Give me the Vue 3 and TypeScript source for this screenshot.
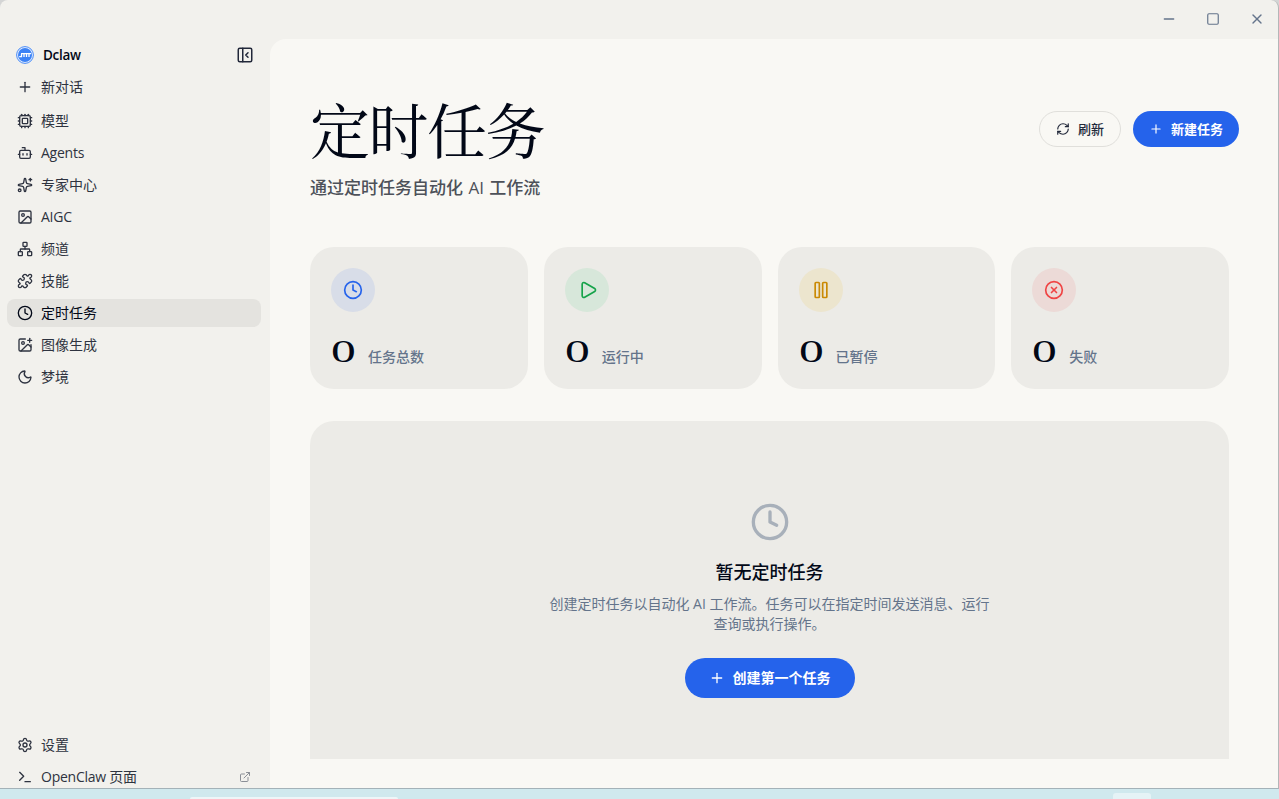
<script setup lang="ts">
import { h, type FunctionalComponent } from 'vue'

interface NavItem {
  icon: string
  label: string
  active?: boolean
  latin?: boolean
}

const icons: Record<string, string> = {
  plus: '<path d="M5 12h14"/><path d="M12 5v14"/>',
  minus: '<path d="M5 12h14"/>',
  x: '<path d="M18 6 6 18"/><path d="m6 6 12 12"/>',
  square: '<rect width="18" height="18" x="3" y="3" rx="2"/>',
  panel: '<rect width="18" height="18" x="3" y="3" rx="2"/><path d="M9 3v18"/><path d="m16 15-3-3 3-3"/>',
  cpu: '<rect width="16" height="16" x="4" y="4" rx="2"/><rect width="8" height="8" x="8" y="8" rx="1"/><path d="M17 2v2"/><path d="M17 20v2"/><path d="M2 17h2"/><path d="M2 7h2"/><path d="M20 17h2"/><path d="M20 7h2"/><path d="M7 2v2"/><path d="M7 20v2"/><path d="M12 2v2"/><path d="M12 20v2"/><path d="M2 12h2"/><path d="M20 12h2"/>',
  bot: '<path d="M12 8V4H8"/><rect width="16" height="12" x="4" y="8" rx="2"/><path d="M2 14h2"/><path d="M20 14h2"/><path d="M15 13v2"/><path d="M9 13v2"/>',
  sparkles: '<path d="M11.017 2.814a1 1 0 0 1 1.966 0l1.051 5.558a2 2 0 0 0 1.594 1.594l5.558 1.051a1 1 0 0 1 0 1.966l-5.558 1.051a2 2 0 0 0-1.594 1.594l-1.051 5.558a1 1 0 0 1-1.966 0l-1.051-5.558a2 2 0 0 0-1.594-1.594l-5.558-1.051a1 1 0 0 1 0-1.966l5.558-1.051a2 2 0 0 0 1.594-1.594z"/><path d="M20 2v4"/><path d="M22 4h-4"/><circle cx="4" cy="20" r="2"/>',
  image: '<rect width="18" height="18" x="3" y="3" rx="2" ry="2"/><circle cx="9" cy="9" r="2"/><path d="m21 15-3.086-3.086a2 2 0 0 0-2.828 0L6 21"/>',
  network: '<rect x="16" y="16" width="6" height="6" rx="1"/><rect x="2" y="16" width="6" height="6" rx="1"/><rect x="9" y="2" width="6" height="6" rx="1"/><path d="M5 16v-3a1 1 0 0 1 1-1h12a1 1 0 0 1 1 1v3"/><path d="M12 12V8"/>',
  puzzle: '<path d="M15.39 4.39a1 1 0 0 0 1.68-.474 2.5 2.5 0 1 1 3.014 3.015 1 1 0 0 0-.474 1.68l1.683 1.682a2.414 2.414 0 0 1 0 3.414L19.61 15.39a1 1 0 0 1-1.68-.474 2.5 2.5 0 1 0-3.014 3.015 1 1 0 0 1 .474 1.68l-1.683 1.682a2.414 2.414 0 0 1-3.414 0L8.61 19.61a1 1 0 0 0-1.68.474 2.5 2.5 0 1 1-3.014-3.015 1 1 0 0 0 .474-1.68l-1.683-1.682a2.414 2.414 0 0 1 0-3.414L4.39 8.61a1 1 0 0 1 1.68.474 2.5 2.5 0 1 0 3.014-3.015 1 1 0 0 1-.474-1.68l1.683-1.682a2.414 2.414 0 0 1 3.414 0z"/>',
  clock: '<circle cx="12" cy="12" r="10"/><path d="M12 6v6l4 2"/>',
  imagePlus: '<path d="M16 5h6"/><path d="M19 2v6"/><path d="M21 11.5V19a2 2 0 0 1-2 2H5a2 2 0 0 1-2-2V5a2 2 0 0 1 2-2h7.5"/><path d="m21 15-3.086-3.086a2 2 0 0 0-2.828 0L6 21"/><circle cx="9" cy="9" r="2"/>',
  moon: '<path d="M20.985 12.486a9 9 0 1 1-9.473-9.472c.405-.022.617.46.402.803a6 6 0 0 0 8.268 8.268c.344-.215.825-.004.803.401"/>',
  settings: '<path d="M9.671 4.136a2.34 2.34 0 0 1 4.659 0 2.34 2.34 0 0 0 3.319 1.915 2.34 2.34 0 0 1 2.33 4.033 2.34 2.34 0 0 0 0 3.831 2.34 2.34 0 0 1-2.33 4.033 2.34 2.34 0 0 0-3.319 1.915 2.34 2.34 0 0 1-4.659 0 2.34 2.34 0 0 0-3.32-1.915 2.34 2.34 0 0 1-2.33-4.033 2.34 2.34 0 0 0 0-3.831A2.34 2.34 0 0 1 6.35 6.051a2.34 2.34 0 0 0 3.319-1.915"/><circle cx="12" cy="12" r="3"/>',
  terminal: '<path d="M12 19h8"/><path d="m4 17 6-6-6-6"/>',
  external: '<path d="M15 3h6v6"/><path d="M10 14 21 3"/><path d="M18 13v6a2 2 0 0 1-2 2H5a2 2 0 0 1-2-2V8a2 2 0 0 1 2-2h6"/>',
  refresh: '<path d="M3 12a9 9 0 0 1 9-9 9.75 9.75 0 0 1 6.74 2.74L21 8"/><path d="M21 3v5h-5"/><path d="M21 12a9 9 0 0 1-9 9 9.75 9.75 0 0 1-6.74-2.74L3 16"/><path d="M8 16H3v5"/>',
  play: '<path d="M5 5a2 2 0 0 1 3.008-1.728l11.997 6.998a2 2 0 0 1 .003 3.458l-12 7A2 2 0 0 1 5 19z"/>',
  pause: '<rect x="14" y="3" width="5" height="18" rx="1"/><rect x="5" y="3" width="5" height="18" rx="1"/>',
  failed: '<circle cx="12" cy="12" r="10"/><path d="m15 9-6 6"/><path d="m9 9 6 6"/>',
}

const Icon: FunctionalComponent<{ name: string; size?: number; weight?: number }> = (props) =>
  h('svg', {
    width: props.size ?? 16,
    height: props.size ?? 16,
    viewBox: '0 0 24 24',
    fill: 'none',
    stroke: 'currentColor',
    'stroke-width': props.weight ?? 2,
    'stroke-linecap': 'round',
    'stroke-linejoin': 'round',
    innerHTML: icons[props.name],
  })
Icon.props = ['name', 'size', 'weight']

const nav: NavItem[] = [
  { icon: 'cpu', label: '模型' },
  { icon: 'bot', label: 'Agents', latin: true },
  { icon: 'sparkles', label: '专家中心' },
  { icon: 'image', label: 'AIGC', latin: true },
  { icon: 'network', label: '频道' },
  { icon: 'puzzle', label: '技能' },
  { icon: 'clock', label: '定时任务', active: true },
  { icon: 'imagePlus', label: '图像生成' },
  { icon: 'moon', label: '梦境' },
]

const stats = [
  { icon: 'clock', tone: 'blue', value: 0, label: '任务总数' },
  { icon: 'play', tone: 'green', value: 0, label: '运行中' },
  { icon: 'pause', tone: 'yellow', value: 0, label: '已暂停' },
  { icon: 'failed', tone: 'red', value: 0, label: '失败' },
]
</script>

<template>
  <div class="desktop">
    <div class="window">
      <header class="titlebar">
        <button class="win-btn"><Icon name="minus" /></button>
        <button class="win-btn"><Icon name="square" :size="14" /></button>
        <button class="win-btn"><Icon name="x" /></button>
      </header>
      <div class="body">
        <aside class="sidebar">
          <div class="brand">
            <svg class="logo" width="18" height="18" viewBox="0 0 18 18">
              <circle cx="9" cy="9" r="8.4" fill="#e8effc" stroke="#4a8cf7" stroke-width="1" />
              <circle cx="9" cy="9" r="7" fill="#3b82f6" />
              <path d="M3.2 10.6h2.3V8M8 11V8M10.5 11V8M13 11V8M5 7.6h10" fill="none" stroke="#fff" stroke-width="1.3" />
            </svg>
            <span class="brand-name">Dclaw</span>
            <Icon class="collapse" name="panel" :size="18" />
          </div>
          <nav class="nav">
            <a class="item new"><Icon name="plus" /><span>新对话</span></a>
            <a v-for="item in nav" :key="item.label" class="item" :class="{ active: item.active, latin: item.latin }">
              <Icon :name="item.icon" /><span>{{ item.label }}</span>
            </a>
          </nav>
          <nav class="nav foot">
            <a class="item"><Icon name="settings" /><span>设置</span></a>
            <a class="item latin"><Icon name="terminal" /><span>OpenClaw 页面</span><Icon class="ext" name="external" :size="12" /></a>
          </nav>
        </aside>
        <main class="main">
          <div class="head">
            <div>
              <h1>定时任务</h1>
              <p class="subtitle">通过定时任务自动化 AI 工作流</p>
            </div>
            <div class="actions">
              <button class="btn outline"><Icon name="refresh" :size="14" /><span>刷新</span></button>
              <button class="btn primary"><Icon name="plus" :size="14" /><span>新建任务</span></button>
            </div>
          </div>
          <div class="scroll">
            <section class="stats">
              <div v-for="s in stats" :key="s.label" class="card">
                <div class="badge" :class="s.tone"><Icon :name="s.icon" :size="20" /></div>
                <div class="figure">
                  <span class="value">{{ s.value }}</span>
                  <span class="caption">{{ s.label }}</span>
                </div>
              </div>
            </section>
            <section class="empty">
              <Icon class="empty-icon" name="clock" :size="40" />
              <h3>暂无定时任务</h3>
              <p>创建定时任务以自动化 AI 工作流。任务可以在指定时间发送消息、运行查询或执行操作。</p>
              <button class="btn primary large"><Icon name="plus" :size="16" /><span>创建第一个任务</span></button>
            </section>
          </div>
        </main>
      </div>
    </div>
    <div class="taskbar"><span class="search"></span><span class="tile"></span></div>
  </div>
</template>

<style>
html,
body {
  margin: 0;
  overflow: hidden;
}
</style>

<style scoped>
.desktop {
  width: 1279px;
  height: 799px;
  box-sizing: border-box;
  display: flex;
  flex-direction: column;
  background: linear-gradient(#d4d5d5 0 400px, #d0e9ee 400px);
  color: #020817;
  font-family: 'Open Sans', 'Noto Sans CJK SC', sans-serif;
  overflow: hidden;
}
.window {
  height: 789px;
  flex: none;
  box-sizing: border-box;
  border-right: 1px solid #b4b7b8;
  border-bottom: 1px solid #a4b2b8;
  border-radius: 8px 8px 0 0;
  background: #f2f1ed;
  display: flex;
  flex-direction: column;
  overflow: hidden;
}
.titlebar {
  height: 38px;
  margin-bottom: 1px;
  margin-right: -1px;
  flex: none;
  display: flex;
  justify-content: flex-end;
}
.win-btn {
  width: 44px;
  border: 0;
  padding: 0;
  background: none;
  color: #64748b;
  display: flex;
  align-items: center;
  justify-content: center;
}
.body {
  flex: 1;
  min-height: 0;
  display: flex;
}
.sidebar {
  width: 270px;
  flex: none;
  box-sizing: border-box;
  padding: 0 9px 0 7px;
  display: flex;
  flex-direction: column;
}
.brand {
  height: 32px;
  padding: 0 7px 0 9px;
  display: flex;
  align-items: center;
}
.brand-name {
  margin-left: 9px;
  font-size: 13.5px;
  font-weight: 600;
  letter-spacing: -0.3px;
}
.collapse {
  margin-left: auto;
  color: #22283a;
}
.nav {
  display: flex;
  flex-direction: column;
  gap: 4px;
}
.item {
  height: 28px;
  box-sizing: border-box;
  padding: 0 10px;
  border-radius: 8px;
  display: flex;
  align-items: center;
  gap: 8px;
  font-size: 14px;
  line-height: 20px;
  color: #2e3340;
}
.item.new {
  margin: 2px 0;
}
.item svg {
  flex: none;
}
.item.active {
  background: #e4e3df;
  color: #020817;
}
.item.latin span {
  letter-spacing: -0.25px;
}
.item .ext {
  margin-left: auto;
  color: #8b8f96;
}
.foot {
  margin-top: auto;
  margin-bottom: -3px;
}
.main {
  flex: 1;
  min-width: 0;
  box-sizing: border-box;
  padding: 59px 39px 29px 40px;
  border-radius: 16px 0 0 0;
  background: #f9f8f4;
  display: flex;
  flex-direction: column;
}
.head {
  height: 149px;
  flex: none;
  display: flex;
  justify-content: space-between;
}
h1 {
  margin: 0;
  height: 63px;
  font-family: 'Noto Serif CJK SC', 'Liberation Serif', 'Noto Sans CJK SC', serif;
  font-size: 60px;
  line-height: 60px;
  font-weight: 400;
  letter-spacing: -1.5px;
}
.subtitle {
  margin: 14px 0 0;
  font-size: 17px;
  line-height: 26px;
  font-weight: 500;
  word-spacing: 1px;
  color: #4d5159;
}
.actions {
  margin-top: 13px;
  display: flex;
  align-items: flex-start;
  gap: 12px;
}
.btn {
  height: 36px;
  box-sizing: border-box;
  border: 0;
  border-radius: 20px;
  padding: 0 16px;
  display: flex;
  align-items: center;
  gap: 8px;
  font-family: inherit;
  font-size: 13px;
  font-weight: 600;
}
.btn span {
  padding-bottom: 2px;
}
.outline {
  width: 82px;
  border: 1px solid #e0dfdb;
  background: transparent;
  color: #22283a;
}
.outline span {
  font-weight: 500;
}
.primary {
  width: 106px;
  background: #2563eb;
  color: #fff;
}
.scroll {
  flex: 1;
  min-height: 0;
  margin-right: 10px;
  overflow: hidden;
}
.stats {
  display: grid;
  grid-template-columns: repeat(4, 1fr);
  gap: 16px;
}
.card {
  height: 142px;
  box-sizing: border-box;
  padding: 21px 21px 17px;
  border-radius: 24px;
  background: #ecebe7;
  display: flex;
  flex-direction: column;
  justify-content: space-between;
}
.badge {
  width: 44px;
  height: 44px;
  border-radius: 50%;
  display: flex;
  align-items: center;
  justify-content: center;
}
.blue {
  background: #d8dde8;
  color: #2563eb;
}
.green {
  background: #d7e7da;
  color: #16a34a;
}
.green svg {
  margin-left: 2px;
}
.yellow {
  background: #ece5ce;
  color: #ca8a04;
}
.red {
  background: #ecdad7;
  color: #ef4444;
}
.figure {
  height: 40px;
  display: flex;
  align-items: baseline;
}
.value {
  width: 25px;
  margin-right: 12px;
  font-family: 'Liberation Serif', serif;
  font-size: 31px;
  line-height: 40px;
  font-weight: 400;
  transform: scaleX(1.6);
  transform-origin: left;
}
.caption {
  font-size: 14px;
  line-height: 20px;
  font-weight: 500;
  color: #64748b;
}
.empty {
  margin-top: 32px;
  height: 360px;
  box-sizing: border-box;
  padding-top: 81px;
  border-radius: 24px;
  background: #ecebe7;
  display: flex;
  flex-direction: column;
  align-items: center;
}
.empty-icon {
  flex: none;
  color: #a8b0ba;
}
h3 {
  margin: 16px 0 0;
  font-size: 18px;
  line-height: 28px;
  font-weight: 500;
}
.empty p {
  margin: 8px 0 24px;
  width: 448px;
  font-size: 14px;
  line-height: 20px;
  text-align: center;
  color: #64748b;
}
.large {
  width: 170px;
  height: 40px;
  padding: 0 24px;
  font-size: 14px;
}
.taskbar {
  flex: 1;
  display: flex;
  align-items: flex-end;
  padding: 0 128px 0 190px;
  justify-content: space-between;
}
.search {
  width: 208px;
  height: 2px;
  border-radius: 8px 8px 0 0;
  background: #eef6f8;
}
.tile {
  width: 38px;
  height: 6px;
  border-radius: 3px 3px 0 0;
  background: #e5f3f6;
}
</style>
